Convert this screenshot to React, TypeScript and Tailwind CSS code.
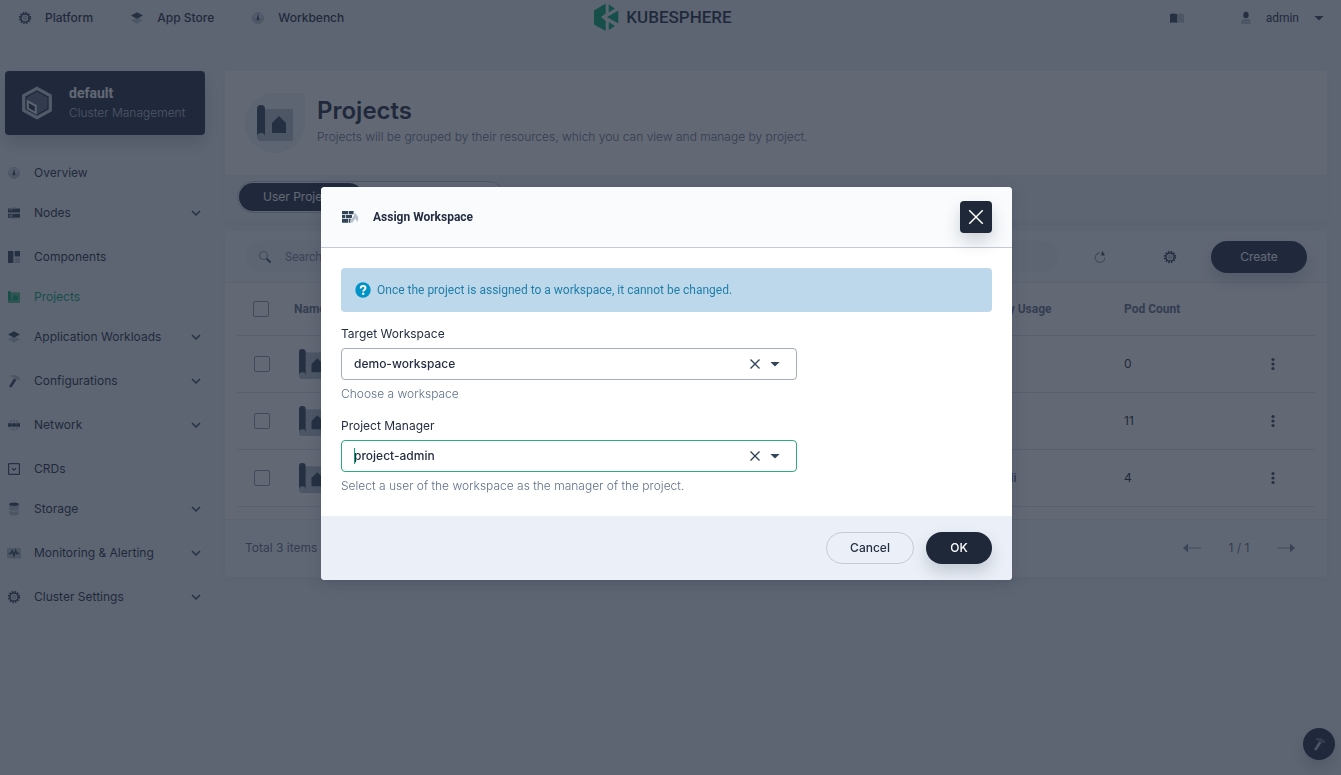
import React from 'react';

type IconProps = { className?: string };

const Svg = ({ className = 'size-4', children }: IconProps & { children: React.ReactNode }) => (
  <svg viewBox="0 0 16 16" className={`shrink-0 ${className}`} aria-hidden="true">
    {children}
  </svg>
);

const D = '#324558';
const L = '#b6c2cd';

const GearIcon = ({ className }: IconProps) => (
  <Svg className={className}>
    <circle cx="8" cy="8" r="5.2" fill="none" stroke={D} strokeWidth="2" strokeDasharray="1.5 1.22" />
    <circle cx="8" cy="8" r="4.1" fill="none" stroke={D} strokeWidth="1.5" />
    <circle cx="8" cy="8" r="2.5" fill={L} />
  </Svg>
);

const LayersIcon = ({ className }: IconProps) => (
  <Svg className={className}>
    <path d="M2 10.2 8 7.4l6 2.8-6 3.6z" fill={L} />
    <path d="M2 5.6 8 2.2l6 3.4-6 3.2z" fill={D} />
  </Svg>
);

const CompassIcon = ({ className }: IconProps) => (
  <Svg className={className}>
    <circle cx="8" cy="8" r="5.5" fill="#d3dbe3" stroke={L} strokeWidth="1" />
    <path d="M2.6 8h10.8A5.4 5.4 0 0 1 2.6 8z" fill={L} />
    <path d="M8 3.6 9.2 8.6a1.3 1.3 0 1 1-2.4 0z" fill={D} />
  </Svg>
);

const NodesIcon = () => (
  <Svg>
    <path d="M2 3.4h12v4H2zM2 8.8h12v4H2z" fill={D} />
    <path d="M5 2.4h6v1H5zM5 12.8h6v1H5z" fill={L} />
    <path d="M3.3 4.3h1v1h-1zM5.3 4.3h1v1h-1zM3.3 9.7h1v2h-1zM5.3 9.7h1v2h-1z" fill="#fff" />
  </Svg>
);

const ComponentsIcon = () => (
  <Svg>
    <path d="M2 2h5.4v12H2zM8.6 2H14v5.4H8.6z" fill={D} />
    <path d="M8.6 8.6H14V14H8.6z" fill={L} />
  </Svg>
);

const ProjectIcon = ({ className, dark = D, light = L }: IconProps & { dark?: string; light?: string }) => (
  <svg viewBox="0 0 36 36" className={`shrink-0 ${className ?? 'size-4'}`} aria-hidden="true">
    <path d="M4 4h32v32H4z" fill={light} />
    <path d="M0 4a4 4 0 0 1 8 0v28H0z" fill={dark} />
    <path d="M0 32a4 4 0 0 1 8 0v4H4a4 4 0 0 1-4-4z" fill={light} />
    <path d="m22 11 7 7v10H15V18z" fill={dark} />
  </svg>
);

const HammerIcon = ({ className, dark = D, light = L }: IconProps & { dark?: string; light?: string }) => (
  <Svg className={className}>
    <path d="M8 5.4 10.6 6.6 5.4 14.6 3 13.4z" fill={dark} />
    <path d="M3.6 3.2C6 1.6 9 1.6 11 3l2.6 1.6.6 2-1.4.6-1.6-.8-1 .6L7.4 5C6.6 3.8 5.4 3.4 3.6 3.2z" fill={light} />
  </Svg>
);

const NetworkIcon = () => (
  <Svg>
    <circle cx="8" cy="8" r="5" fill="none" stroke={L} strokeWidth="1.2" strokeDasharray="2.4 .7" />
    <path d="M8 2.6v10.8M5.4 4v8M10.6 4v8" stroke={L} strokeWidth="1" />
    <path d="M2 6.2h3.4v3.6H2zM6.2 6.2h3.6v3.6H6.2zM10.6 6.2H14v3.6h-3.4z" fill={D} />
    <path d="M5 7.4h6v1.2H5z" fill={D} />
  </Svg>
);

const CrdIcon = () => (
  <Svg>
    <rect x="2.6" y="2.6" width="10.8" height="10.8" rx=".6" fill="none" stroke={D} strokeWidth="1.2" />
    <path d="m6 7.3 2 1.8 2-1.8" fill="none" stroke={D} strokeWidth="1.2" />
  </Svg>
);

const StorageIcon = () => (
  <Svg>
    <path
      d="M3.2 3.4h9.6v5c0 .8-2 1.4-4.8 1.4s-4.8-.6-4.8-1.4zM3.2 9.8c1 .7 2.8 1 4.8 1s3.8-.3 4.8-1V13c0 .8-2 1.4-4.8 1.4S3.2 13.8 3.2 13z"
      fill={L}
    />
    <ellipse cx="8" cy="3.2" rx="4.8" ry="1.7" fill={D} />
  </Svg>
);

const MonitorIcon = () => (
  <Svg>
    <rect x="1" y="3" width="14" height="10.4" rx="1" fill={L} />
    <path d="M2.8 8.4h2l1.4-2.6L8 10.6l1.6-5 1.2 2.8h2.4" fill="none" stroke={D} strokeWidth="1.5" />
  </Svg>
);

const ChevronDown = () => (
  <Svg>
    <path d="m4 6 4 4 4-4" fill="none" stroke={D} strokeWidth="1.5" />
  </Svg>
);

const CaretDown = ({ className }: IconProps) => (
  <Svg className={className}>
    <path d="M3.4 6h9.2L8 10.6z" fill={D} />
  </Svg>
);

const CloseIcon = ({ className, weight = 1.4 }: IconProps & { weight?: number }) => (
  <Svg className={className}>
    <path d="m3.5 3.5 9 9m0-9-9 9" fill="none" stroke="currentColor" strokeWidth={weight} />
  </Svg>
);

const BookIcon = () => (
  <Svg>
    <path d="M1 4c2-.6 4.6-.8 7 0v9c-2.400-.6-5-.4-7 0z" fill={D} />
    <path d="M8 4c2.400-.8 5-.6 7 0v9c-2-.4-4.6-.6-7 0z" fill={L} />
  </Svg>
);

const UserIcon = () => (
  <Svg>
    <ellipse cx="8" cy="5" rx="2.7" ry="3.2" fill={D} />
    <path d="M3.2 14v-2.6C3.2 9.600 5 9 8 9s4.8.6 4.8 2.4V14z" fill={L} />
  </Svg>
);

const SearchIcon = () => (
  <Svg>
    <circle cx="6.5" cy="6.5" r="4" fill="none" stroke="#8fa0b0" strokeWidth="1.2" />
    <path d="m9.6 9.6 4 4" stroke={D} strokeWidth="1.8" />
  </Svg>
);

const RefreshIcon = () => (
  <Svg>
    <path d="M7.6 4A4.7 4.7 0 1 0 12.7 8.600" fill="none" stroke="#8fa0b0" strokeWidth="1.300" />
    <path d="M10 1.800 12.600 5.400 9.400 6.600z" fill={D} />
    <path d="M9.600 5.600 12.400 4.800V6.400H10z" fill={D} />
  </Svg>
);

const MoreIcon = () => (
  <Svg>
    <circle cx="8" cy="3.5" r="1.6" fill={D} />
    <circle cx="8" cy="8" r="1.6" fill={D} />
    <circle cx="8" cy="12.5" r="1.6" fill={D} />
  </Svg>
);

const PageArrow = ({ className }: IconProps) => (
  <svg viewBox="0 0 18 10" className={`h-2.5 w-[18px] ${className ?? ''}`} aria-hidden="true">
    <path d="M4 5h14" stroke={L} strokeWidth="1.6" />
    <path d="M0 5 5 .5v9z" fill="#79879c" />
  </svg>
);

const FirewallIcon = () => (
  <svg viewBox="0 0 18 14" className="h-3.5 w-[18px] shrink-0" aria-hidden="true">
    <path d="M1 1h6v3.300H1zM7.700 1h5v3.300h-5zM1 5h3.300v3.300H1zM5 5h6v3.300H5zM1 9h6v3.700H1zM7.700 9h3.300v3.700H7.700z" fill={D} />
    <path
      d="M13.200 2.200c2.200 1.400 4.400 3.800 4.400 6.600 0 1.800-.8 3-2 3.900.2-1.600-.2-2.700-1.400-3.600-.4 1.500-1.900 1.900-2.400 3.700h-2c-.6-1.600 0-3.200 1-4.600 1.200-1.600 2.400-3 2.400-6z"
      fill={L}
      stroke="#f9fbfd"
      strokeWidth=".7"
    />
  </svg>
);

const QuestionIcon = () => (
  <Svg>
    <circle cx="8" cy="8" r="7.7" fill="#0093c8" />
    <path
      d="M5.7 6.4C5.7 4.9 6.7 4 8.100 4s2.400.8 2.400 2.100c0 1.700-2.300 1.700-2.300 3.400"
      fill="none"
      stroke="#fff"
      strokeWidth="1.9"
    />
    <circle cx="8.200" cy="11.800" r="1.200" fill="#fff" />
  </Svg>
);

const ClusterIcon = () => (
  <svg viewBox="0 0 32 34" className="h-[34px] w-8 shrink-0" aria-hidden="true">
    <path d="M16 2.300 29.300 9.700v14.600L16 31.700 2.700 24.300V9.700z" fill="none" stroke="#c9d1da" strokeWidth="3.200" />
    <path d="m16 5.800 10.400 5.800v10.800L16 28.200 5.600 22.400V11.600z" fill="#5f6b80" />
    <path d="m6.800 15.400 8 4.500v7.200l-8-4.600z" fill="#242e42" stroke="#e8edf2" strokeWidth="2" />
  </svg>
);

const LogoMark = () => (
  <svg viewBox="0 0 25 28" className="h-7 w-[25px]" aria-hidden="true">
    <path
      d="M0 7.500 11.700.5v10L7 14l4.700 4v10L0 21.500zM14.700 1.500 21 5.500l-6.300 4zM13 14l11.300-6.500v13zM14.700 19l6.300 4-6.300 4z"
      fill="#00aa72"
    />
  </svg>
);

const topNav = [
  { label: 'Platform', icon: <GearIcon /> },
  { label: 'App Store', icon: <LayersIcon /> },
  { label: 'Workbench', icon: <CompassIcon /> },
];

const sideNav = [
  { label: 'Overview', icon: <CompassIcon /> },
  { label: 'Nodes', icon: <NodesIcon />, sub: true },
  { label: 'Components', icon: <ComponentsIcon /> },
  { label: 'Projects', icon: <ProjectIcon className="m-0.5 size-3" dark="#00aa72" light="#55bc8a" />, active: true },
  { label: 'Application Workloads', icon: <LayersIcon />, sub: true },
  { label: 'Configurations', icon: <HammerIcon />, sub: true },
  { label: 'Network', icon: <NetworkIcon />, sub: true },
  { label: 'CRDs', icon: <CrdIcon /> },
  { label: 'Storage', icon: <StorageIcon />, sub: true },
  { label: 'Monitoring & Alerting', icon: <MonitorIcon />, sub: true },
  { label: 'Cluster Settings', icon: <GearIcon />, sub: true },
];

const rows = [
  { memory: '-', pods: '0' },
  { memory: '-', pods: '11' },
  { memory: '48.56 Mi', pods: '4' },
];

function Checkbox({ label }: { label: string }) {
  return (
    <input
      type="checkbox"
      aria-label={label}
      className="block size-4 appearance-none rounded-xs border border-[#8f9bab] bg-white"
    />
  );
}

function Header() {
  return (
    <header className="grid h-[51px] grid-cols-[1fr_auto_1fr] items-start border-b border-[#e6ecf2] pr-4 pl-[17px]">
      <nav className="flex h-9 items-center gap-9 font-medium text-[#242e42]">
        {topNav.map((item) => (
          <a key={item.label} href="#" className="flex items-center gap-3">
            {item.icon}
            {item.label}
          </a>
        ))}
      </nav>
      <a href="#" className="mr-4 flex h-[34px] items-center gap-[7px]">
        <LogoMark />
        <span className="font-['Roboto',sans-serif] text-[17px] font-medium text-[#242e42]">KUBESPHERE</span>
      </a>
      <div className="flex h-9 items-center justify-end">
        <button type="button" aria-label="Documentation" className="mr-[53px]">
          <BookIcon />
        </button>
        <button
          type="button"
          className="-mr-0.5 flex items-center gap-3 font-['Roboto',sans-serif] text-[#242e42]"
        >
          <UserIcon />
          admin
          <CaretDown />
        </button>
      </div>
    </header>
  );
}

function Sidebar() {
  return (
    <aside className="w-[200px] shrink-0">
      <button
        type="button"
        className="flex h-16 w-full items-center gap-4 rounded bg-[#242e42] px-4 text-left shadow-[0_8px_16px_rgba(36,46,66,0.2)]"
      >
        <ClusterIcon />
        <span className="flex flex-col">
          <span className="font-['Roboto',sans-serif] text-sm leading-5 font-bold text-white">default</span>
          <span className="leading-5 font-light text-[#b6c2cd]">Cluster Management</span>
        </span>
      </button>
      <ul className="mt-[18px]">
        {sideNav.map((item) => (
          <li key={item.label} className={item.sub ? 'mb-1' : ''}>
            <a
              href="#"
              className={`flex h-10 items-center gap-3 pr-px ${item.active ? 'text-[#00aa72]' : 'text-[#242e42]'}`}
            >
              <span className="ml-px flex">{item.icon}</span>
              <span className="flex-1 font-normal">{item.label}</span>
              {item.sub && <ChevronDown />}
            </a>
          </li>
        ))}
      </ul>
    </aside>
  );
}

function Banner() {
  return (
    <section className="rounded bg-white shadow-[0_4px_8px_rgba(36,46,66,0.06)]">
      <div className="flex h-[104px] items-center gap-3 px-5">
        <div className="flex size-[60px] items-center justify-center rounded-full rounded-tr-none bg-[#eff4f9]">
          <ProjectIcon className="size-9" />
        </div>
        <div className="pb-1">
          <h1 className="text-2xl leading-8 font-semibold text-[#242e42]">Projects</h1>
          <p className="leading-5 font-light text-[#5f708a]">
            Projects will be grouped by their resources, which you can view and manage by project.
          </p>
        </div>
      </div>
      <div className="flex h-[46px] items-start rounded-b bg-[#eff4f9] px-3 pt-1.5">
        <div className="flex rounded-full border border-[#b6c2cd] bg-[#f9fbfd] p-px">
          <button type="button" className="h-7 rounded-full bg-[#242e42] px-6 text-white">
            User Projects
          </button>
          <button type="button" className="h-7 rounded-full px-6 text-[#5f708a]">
            System Projects
          </button>
        </div>
      </div>
    </section>
  );
}

function ProjectTable() {
  return (
    <section className="mt-2.5 rounded bg-white shadow-[0_4px_8px_rgba(36,46,66,0.06)]">
      <div className="flex h-[52px] items-center rounded-t border-b border-[#e6ecf2] bg-[#f9fbfd] px-5">
        <label className="flex h-8 flex-1 items-center gap-3 rounded-full bg-[#eff4f9] px-3">
          <SearchIcon />
          <input
            type="text"
            aria-label="Search"
            placeholder="Search by name"
            className="w-full bg-transparent font-['Roboto',sans-serif] outline-none placeholder:text-[#79879c]"
          />
        </label>
        <button type="button" aria-label="Refresh" className="ml-[34px]">
          <RefreshIcon />
        </button>
        <button type="button" aria-label="Table settings" className="mr-[33px] ml-[54px]">
          <GearIcon />
        </button>
        <button
          type="button"
          className="h-8 w-24 rounded-full bg-[#242e42] text-white shadow-[0_8px_16px_rgba(36,46,66,0.2)]"
        >
          Create
        </button>
      </div>
      <div className="px-3 pb-3">
        <table className="w-full table-fixed border-collapse text-left text-[#242e42]">
          <colgroup>
            <col className="w-[57px]" />
            <col />
            <col className="w-[154px]" />
            <col className="w-[131px]" />
            <col className="w-[60px]" />
          </colgroup>
          <thead>
            <tr className="h-[52px] border-b border-[#dde4eb] font-['Roboto',sans-serif] text-[#5f708a]">
              <th className="pl-4">
                <Checkbox label="Select all" />
              </th>
              <th className="font-bold">Name</th>
              <th className="font-bold">Memory Usage</th>
              <th className="font-bold">Pod Count</th>
              <th aria-label="Actions" />
            </tr>
          </thead>
          <tbody>
            {rows.map((row, index) => (
              <tr key={index} className="h-[57px] border-b border-[#dde4eb]">
                <td className="pl-[17px]">
                  <Checkbox label={`Select row ${index + 1}`} />
                </td>
                <td className="pl-[5px]">
                  <ProjectIcon className="size-[30px]" />
                </td>
                <td className="font-['Roboto',sans-serif]">{row.memory}</td>
                <td>{row.pods}</td>
                <td className="pl-2.5">
                  <button type="button" aria-label={`Actions for row ${index + 1}`} className="block">
                    <MoreIcon />
                  </button>
                </td>
              </tr>
            ))}
          </tbody>
        </table>
      </div>
      <footer className="flex h-[58px] items-center justify-between rounded-b border-t border-[#e6ecf2] bg-[#f9fbfd] pr-8 pl-5 text-[#5f708a]">
        <span>Total 3 items</span>
        <span className="flex items-center gap-6">
          <button type="button" aria-label="Previous page">
            <PageArrow />
          </button>
          <span className="w-7 text-center">1 / 1</span>
          <button type="button" aria-label="Next page">
            <PageArrow className="rotate-180" />
          </button>
        </span>
      </footer>
    </section>
  );
}

type FieldProps = { id: string; label: string; value: string; help: string; focused?: boolean };

function SelectField({ id, label, value, help, focused }: FieldProps) {
  return (
    <div className="mt-3">
      <label htmlFor={id} className="block leading-5 text-[#242e42]">
        {label}
      </label>
      <div className="relative my-1 w-[70%]">
        <select
          id={id}
          defaultValue={value}
          className={`block h-8 w-full appearance-none rounded border bg-white px-3 font-medium text-[#242e42] outline-none ${
            focused ? 'border-[#2fa982]' : 'border-[#a3adbb]'
          }`}
        >
          <option>{value}</option>
        </select>
        {focused && <span className="absolute top-2 left-[13px] h-4 w-px bg-[#00aa72]" />}
        <div className="absolute top-2 right-3.5 flex items-center gap-1 text-[#324558]">
          <button type="button" aria-label={`Clear ${label}`}>
            <CloseIcon />
          </button>
          <CaretDown />
        </div>
      </div>
      <p className="leading-5 font-light text-[#5f708a]">{help}</p>
    </div>
  );
}

function AssignDialog() {
  return (
    <div className="fixed inset-0 flex items-center justify-center bg-[#202839]/70 pr-2 pb-2">
      <div
        role="dialog"
        aria-labelledby="dialog-title"
        className="w-[691px] overflow-hidden rounded bg-white shadow-[0_4px_16px_rgba(36,46,66,0.2)]"
      >
        <div className="flex h-[61px] items-center gap-3.5 border-b border-[#c3ccd6] bg-[#f9fbfd] px-5 font-['Roboto',sans-serif]">
          <FirewallIcon />
          <h2 id="dialog-title" className="flex-1 font-bold text-[#242e42]">
            Assign Workspace
          </h2>
          <button
            type="button"
            aria-label="Close"
            className="flex size-8 items-center justify-center rounded bg-[#1f2839] text-white shadow-[0_8px_16px_rgba(36,46,66,0.2)]"
          >
            <CloseIcon className="size-6" weight={1} />
          </button>
        </div>
        <div className="p-5">
          <div className="flex h-11 items-center gap-1.5 rounded bg-[#bed8eb] px-3.5 font-['Roboto',sans-serif] text-[#1f7fa9]">
            <QuestionIcon />
            Once the project is assigned to a workspace, it cannot be changed.
          </div>
          <SelectField id="workspace" label="Target Workspace" value="demo-workspace" help="Choose a workspace" />
          <SelectField
            id="manager"
            label="Project Manager"
            value="project-admin"
            help="Select a user of the workspace as the manager of the project."
            focused
          />
        </div>
        <div className="flex h-16 items-center justify-end gap-3 bg-[#ebf0f8] px-5 font-medium">
          <button type="button" className="h-8 w-[88px] rounded-full border border-[#c3ccd6] text-[#242e42]">
            Cancel
          </button>
          <button
            type="button"
            className="h-8 w-[66px] rounded-full bg-[#1f2839] text-white shadow-[0_8px_16px_rgba(36,46,66,0.2)]"
          >
            OK
          </button>
        </div>
      </div>
    </div>
  );
}

export default function App() {
  return (
    <div className="min-h-screen bg-[#eff4f9] font-['Inter','Roboto',sans-serif] text-xs">
      <Header />
      <div className="flex gap-5 pt-5 pr-3.5 pb-5 pl-[5px]">
        <Sidebar />
        <main className="min-w-0 flex-1">
          <Banner />
          <ProjectTable />
        </main>
      </div>
      <button
        type="button"
        aria-label="Toolbox"
        className="fixed right-1.5 bottom-[15px] flex size-8 items-center justify-center rounded-full bg-[#242e42] shadow-[0_8px_16px_rgba(36,46,66,0.2)]"
      >
        <HammerIcon dark="#b6c2cd" light="#5f708a" />
      </button>
      <AssignDialog />
    </div>
  );
}
